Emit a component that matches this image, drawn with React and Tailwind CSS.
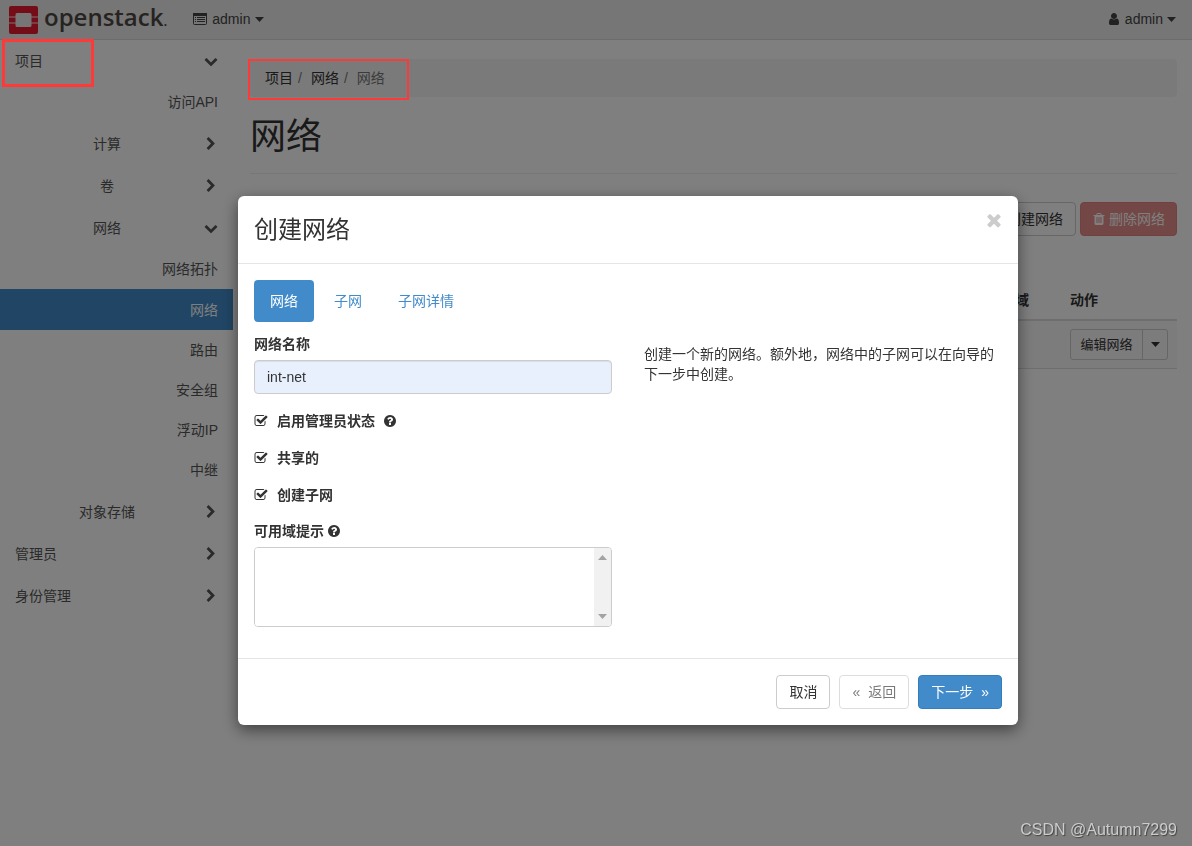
import React from 'react';

// Font Awesome 4 glyphs, 1792 units per em
const ICON_PATHS = {
  chevronDown: 'M1683 808l-742 741q-19 19-45 19t-45-19l-742-741q-19-19-19-45.5t19-45.5l166-165q19-19 45-19t45 19l531 531 531-531q19-19 45-19t45 19l166 165q19 19 19 45.5t-19 45.5z',
  chevronRight: 'M1363 877l-742 742q-19 19-45 19t-45-19l-166-166q-19-19-19-45t19-45l531-531-531-531q-19-19-19-45t19-45l166-166q19-19 45-19t45 19l742 742q19 19 19 45t-19 45z',
  times: 'M1490 1322q0 40-28 68l-136 136q-28 28-68 28t-68-28l-294-294-294 294q-28 28-68 28t-68-28l-136-136q-28-28-28-68t28-68l294-294-294-294q-28-28-28-68t28-68l136-136q28-28 68-28t68 28l294 294 294-294q28-28 68-28t68 28l136 136q28 28 28 68t-28 68l-294 294 294 294q28 28 28 68z',
  user: 'M1536 1399q0 109-62.5 187t-150.5 78h-854q-88 0-150.5-78t-62.5-187q0-85 8.5-160.5t31.5-152 58.5-131 94-89 134.5-34.5q131 128 313 128t313-128q76 0 134.5 34.5t94 89 58.5 131 31.5 152 8.5 160.5zm-256-887q0 159-112.5 271.5t-271.5 112.5-271.5-112.5-112.5-271.5 112.5-271.5 271.5-112.5 271.5 112.5 112.5 271.5z',
  trash: 'M704 1376v-704q0-14-9-23t-23-9h-64q-14 0-23 9t-9 23v704q0 14 9 23t23 9h64q14 0 23-9t9-23zm256 0v-704q0-14-9-23t-23-9h-64q-14 0-23 9t-9 23v704q0 14 9 23t23 9h64q14 0 23-9t9-23zm256 0v-704q0-14-9-23t-23-9h-64q-14 0-23 9t-9 23v704q0 14 9 23t23 9h64q14 0 23-9t9-23zm-544-992h448l-48-117q-7-9-17-11h-317q-10 2-17 11zm928 32v64q0 14-9 23t-23 9h-96v948q0 83-47 143.5t-113 60.5h-832q-66 0-113-58.5t-47-141.5v-952h-96q-14 0-23-9t-9-23v-64q0-14 9-23t23-9h309l70-167q15-37 54-63t79-26h320q40 0 79 26t54 63l70 167h309q14 0 23 9t9 23z',
  question: 'M1024 1376v-192q0-14-9-23t-23-9h-192q-14 0-23 9t-9 23v192q0 14 9 23t23 9h192q14 0 23-9t9-23zm256-672q0-88-55.5-163t-138.5-116-170-41q-243 0-371 213-15 24 8 42l132 100q7 6 19 6 16 0 25-12 53-68 86-92 34-24 86-24 48 0 85.5 26t37.5 59q0 38-20 61t-68 45q-63 28-115.5 86.5t-52.5 125.5v36q0 14 9 23t23 9h192q14 0 23-9t9-23q0-19 21.5-49.5t54.5-49.5q32-18 49-28.5t46-35 44.5-48 28-60.5 12.5-81zm384 192q0 209-103 385.5t-279.5 279.5-385.5 103-385.5-103-279.5-279.5-103-385.5 103-385.5 279.5-279.5 385.5-103 385.5 103 279.5 279.5 103 385.5z',
  checkSquare: 'M1472 930v318q0 119-84.5 203.5t-203.5 84.5h-832q-119 0-203.5-84.5t-84.5-203.5v-832q0-119 84.5-203.5t203.5-84.5h832q63 0 117 25 15 7 18 23 3 17-9 29l-49 49q-10 10-23 10-3 0-9-2-23-6-45-6h-832q-66 0-113 47t-47 113v832q0 66 47 113t113 47h832q66 0 113-47t47-113v-254q0-13 9-22l64-64q10-10 23-10 6 0 12 3 20 8 20 29zm231-489l-814 814q-24 24-57 24t-57-24l-430-430q-24-24-24-57t24-57l110-110q24-24 57-24t57 24l263 263 647-647q24-24 57-24t57 24l110 110q24 24 24 57t-24 57z',
};

const Icon = ({ name, className = 'size-3.5' }) => (
  <svg viewBox="0 0 1792 1792" fill="currentColor" aria-hidden="true" className={`shrink-0 ${className}`}>
    <path d={ICON_PATHS[name]} />
  </svg>
);

const Caret = ({ className = 'w-[9px]' }) => (
  <svg viewBox="0 0 9 5" fill="currentColor" aria-hidden="true" className={`h-[5px] shrink-0 ${className}`}>
    <path d="M0 0h9L4.500 5z" />
  </svg>
);

const ListIcon = () => (
  <svg viewBox="0 0 14 12" aria-hidden="true" className="h-3 w-3.5 shrink-0">
    <rect x="0.5" y="0.5" width="13" height="11" rx="1" fill="none" stroke="currentColor" />
    <path fill="currentColor" d="M0 0h14v3H0zM2 4h1v1H2zM2 6h1v1H2zM2 8h1v1H2zM4 4h8v1H4zM4 6h8v1H4zM4 8h8v1H4z" />
  </svg>
);

const Logo = () => (
  <a href="#home" className="flex items-center gap-1.5" aria-label="openstack">
    <svg viewBox="0 0 29 28" fill="#e81a30" aria-hidden="true" className="h-7 w-[29px]">
      <path d="M2 0h25a2 2 0 0 1 2 2v8.500h-6.500V8.500a1.500 1.500 0 0 0-1.500-1.500H8a1.500 1.500 0 0 0-1.500 1.500v2H0V2a2 2 0 0 1 2-2z" />
      <path d="M0 11.500h6.500v5H0zM22.500 11.500H29v5h-6.500z" />
      <path d="M0 17.500h6.500v2A1.500 1.500 0 0 0 8 21h13a1.500 1.500 0 0 0 1.500-1.500v-2H29V26a2 2 0 0 1-2 2H2a2 2 0 0 1-2-2z" />
    </svg>
    <span className="mb-1.5 font-['Open_Sans',sans-serif] text-2xl leading-7 font-semibold text-[#4d4742]">
      openstack<span className="text-sm">.</span>
    </span>
  </a>
);

const Navbar = () => (
  <header className="flex h-10 items-center border-b border-[#d9d9d9] bg-[#ececec] pr-4 pl-[9px] text-[#444]">
    <Logo />
    <button type="button" className="mb-px ml-[26px] flex items-center gap-[5px]">
      <ListIcon />
      admin
      <Caret />
    </button>
    <button type="button" className="mb-px ml-auto flex items-center gap-1">
      <Icon name="user" />
      admin
      <Caret />
    </button>
  </header>
);

const PanelHeader = ({ label, open = false, nested = false, marked = false }) => (
  <button
    type="button"
    aria-expanded={open}
    className={`relative flex h-[42px] w-full items-center pr-[15px] ${nested ? 'pl-2.5 text-center' : 'pl-[15px] text-left'}`}
  >
    <span className="flex-1">{label}</span>
    <Icon name={open ? 'chevronDown' : 'chevronRight'} />
    {marked && <span className="absolute -top-px left-0.5 z-50 h-12 w-[92px] border-3 border-[#ff3838]" />}
  </button>
);

const PanelLink = ({ label, active = false }) => (
  <a
    href="#panel"
    className={`flex items-center justify-end pr-[15px] ${active ? 'h-[41px] bg-[#428bca] text-white' : 'h-10'}`}
  >
    {label}
  </a>
);

const networkPanels = ['网络拓扑', '网络', '路由', '安全组', '浮动IP', '中继'];

const Sidebar = () => (
  <nav className="w-[233px] shrink-0 text-[#555]">
    <PanelHeader label="项目" open marked />
    <div className="pb-px">
      <PanelLink label="访问API" />
    </div>
    <PanelHeader label="计算" nested />
    <PanelHeader label="卷" nested />
    <PanelHeader label="网络" nested open />
    <div className="pb-px">
      {networkPanels.map((label) => (
        <PanelLink key={label} label={label} active={label === '网络'} />
      ))}
    </div>
    <PanelHeader label="对象存储" nested />
    <PanelHeader label="管理员" />
    <PanelHeader label="身份管理" />
  </nav>
);

const Breadcrumb = () => (
  <nav className="relative flex h-[38px] items-center rounded bg-[#f5f5f5] px-[15px] text-[#333]">
    <a href="#project">项目</a>
    <span className="mr-[9px] ml-[5px] text-[#777]">/</span>
    <a href="#network">网络</a>
    <span className="mr-[9px] ml-[5px] text-[#777]">/</span>
    <span className="text-[#777]">网络</span>
    <span className="absolute top-0 -left-0.5 z-50 h-[41px] w-[161px] border-2 border-[#ff3838]" />
  </nav>
);

const NetworksPage = () => (
  <main className="min-w-0 flex-1 pt-[19px] pr-[15px] pl-[17px]">
    <Breadcrumb />
    <h1 className="border-b border-[#eee] pt-5 pb-4 text-4xl leading-10 text-[#333]">网络</h1>
    <div className="mt-7 flex justify-end gap-1">
      <button type="button" className="h-[34px] rounded border border-[#ccc] px-3 text-[#333]">创建网络</button>
      <button
        type="button"
        disabled
        className="flex h-[34px] items-center gap-[3px] rounded border border-[#d43f3a] bg-[#d9534f] px-[11px] text-white opacity-65"
      >
        <Icon name="trash" />
        删除网络
      </button>
    </div>
    <table className="mt-[45px] w-full text-left">
      <thead>
        <tr className="border-b-2 border-[#ddd] text-[#333]">
          <td />
          <th className="w-[83px] px-2 py-[9px]">可用域</th>
          <th className="w-[115px] px-2 py-[9px]">动作</th>
        </tr>
      </thead>
      <tbody>
        <tr className="border-b border-[#ddd] bg-[#f9f9f9]">
          <td />
          <td />
          <td className="p-2">
            <div className="flex h-[31px] w-[98px] rounded-[3px] border border-[#ccc] text-[13px] text-[#333]">
              <button type="button" className="flex-1">编辑网络</button>
              <button type="button" aria-label="更多动作" className="flex w-[25px] items-center justify-center border-l border-[#ccc]">
                <Caret />
              </button>
            </div>
          </td>
        </tr>
      </tbody>
    </table>
  </main>
);

const Checkbox = ({ label, help = false }) => (
  <label className="flex h-5 items-center font-bold">
    <span className="mr-[9px] grid">
      <input type="checkbox" defaultChecked className="size-3.5 appearance-none [grid-area:1/1]" />
      <Icon name="checkSquare" className="pointer-events-none size-3.5 [grid-area:1/1]" />
    </span>
    {label}
    {help && <Icon name="question" className="ml-2 size-3.5" />}
  </label>
);

const tabs = ['网络', '子网', '子网详情'];

const CreateNetworkModal = () => (
  <div
    role="dialog"
    aria-labelledby="modal-title"
    className="w-full max-w-[780px] rounded-md bg-white text-[#333] shadow-[0_5px_15px_rgba(0,0,0,0.5)]"
  >
    <div className="flex items-start justify-between border-b border-[#e5e5e5] p-4">
      <h2 id="modal-title" className="text-2xl leading-[35px]">创建网络</h2>
      <button type="button" aria-label="关闭" className="-mt-0.5 -mr-0.5 text-[#ccc]">
        <Icon name="times" className="size-5" />
      </button>
    </div>

    <div className="px-4 pt-4 pb-[31px]">
      <div role="tablist" className="flex gap-1">
        {tabs.map((tab, i) => (
          <button
            key={tab}
            type="button"
            role="tab"
            aria-selected={i === 0}
            className={`h-[42px] rounded px-4 ${i === 0 ? 'bg-[#428bca] text-white' : 'text-[#428bca]'}`}
          >
            {tab}
          </button>
        ))}
      </div>

      <div className="mt-3 grid grid-cols-2 gap-8">
        <div>
          <label htmlFor="network-name" className="block font-bold">网络名称</label>
          <input
            id="network-name"
            type="text"
            defaultValue="int-net"
            className="mt-1.5 block h-[34px] w-full rounded border border-[#ccc] bg-[#e8f0fe] px-3 inset-shadow-[0_1px_1px_rgba(0,0,0,0.075)]"
          />
          <div className="mt-[17px] flex flex-col gap-[17px]">
            <Checkbox label="启用管理员状态" help />
            <Checkbox label="共享的" />
            <Checkbox label="创建子网" />
          </div>
          <label htmlFor="az-hints" className="mt-4 flex items-center gap-[3px] font-bold">
            可用域提示
            <Icon name="question" />
          </label>
          <div className="mt-1.5 flex h-20 overflow-hidden rounded border border-[#ccc]">
            <select id="az-hints" multiple className="min-w-0 flex-1 overflow-hidden bg-white outline-none" />
            <div className="flex w-[17px] flex-col items-center justify-between bg-[#f1f1f1] py-[7px] text-[#a3a3a3]">
              <Caret className="w-[9px] rotate-180" />
              <Caret />
            </div>
          </div>
        </div>
        <p className="pt-2.5">创建一个新的网络。额外地，网络中的子网可以在向导的下一步中创建。</p>
      </div>
    </div>

    <div className="flex justify-end gap-[9px] border-t border-[#e5e5e5] p-4">
      <button type="button" className="h-[34px] rounded border border-[#ccc] px-3">取消</button>
      <button type="button" disabled className="flex h-[34px] items-center gap-2 rounded border border-[#ccc] px-3 opacity-65">
        <span>«</span>返回
      </button>
      <button type="button" className="flex h-[34px] items-center gap-2 rounded border border-[#357ebd] bg-[#428bca] px-3 text-white">
        下一步<span>»</span>
      </button>
    </div>
  </div>
);

const App = () => {
  return (
    <div className="min-h-screen bg-white font-['Liberation_Sans','Noto_Sans_CJK_SC',sans-serif] text-sm leading-5">
      <Navbar />
      <div className="flex">
        <Sidebar />
        <NetworksPage />
      </div>

      <div className="fixed inset-0 z-40 flex items-start justify-center bg-black/50 pt-[196px] pl-16">
        <CreateNetworkModal />
      </div>

      <div className="fixed right-[15px] bottom-1.5 z-50 font-['Liberation_Sans',sans-serif] text-base leading-5 text-[#ccc] [text-shadow:1px_1px_1px_#444]">
        CSDN @Autumn7299
      </div>
    </div>
  );
};

export default App;
